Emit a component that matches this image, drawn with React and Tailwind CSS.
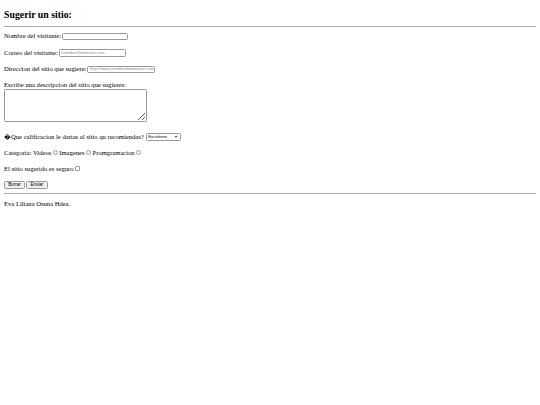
import React from 'react';

const ctrl = "font-['Liberation_Sans',Arial,sans-serif]";

const Campo = ({ label, placeholder, width }) => (
  <div className="h-[16.5px] flex items-center">
    <span>{label}</span>
    <span
      className={`ml-[1px] h-[7.5px] border border-[#999999] rounded-[1.5px] bg-white flex items-center px-[1.5px] overflow-hidden whitespace-nowrap text-[4.3px] text-[#8a8a8a] ${ctrl} ${width}`}
    >
      {placeholder}
    </span>
  </div>
);

const Radio = () => (
  <span className="inline-block mx-[1.5px] w-[5px] h-[5px] rounded-full border border-[#999999] bg-white" />
);

const App = () => {
  return (
    <div className="w-[540px] min-h-[405px] bg-white text-black px-[4px] text-[6.6px] leading-[8px] font-['Liberation_Serif','Times_New_Roman',serif]">
      <h3 className="pt-[10px] text-[9.8px] leading-[10px] font-bold">Sugerir un sitio:</h3>
      <div className="mt-[6px] h-px bg-[#a9a9a9]" />

      <div className="pt-[1px]">
        <Campo label="Nombre del visitante:" placeholder="" width="w-[66px]" />
        <Campo label="Correo del visitante:" placeholder="nombre@dominio.com" width="w-[67px]" />
        <Campo label="Direccion del sitio que sugiere:" placeholder="http://www.nombrededominio.com" width="w-[68px]" />
      </div>

      <div className="mt-[3px] leading-[8px]">Escribe una descripcion del sitio que sugieres:</div>
      <textarea
        readOnly
        className="block w-[143px] h-[33px] border border-[#999999] rounded-[1.5px] bg-white outline-none"
      />

      <div className="mt-[7px] h-[16px] flex items-center">
        <span>{'\uFFFD'}Que calificacion le darias al sitio qu recomiendas?</span>
        <span
          className={`ml-[2px] h-[8px] w-[35px] border border-[#999999] rounded-[1.5px] bg-white flex items-center justify-between px-[1.5px] text-[4.3px] text-black ${ctrl}`}
        >
          <span>Excelente</span>
          <svg width="4" height="3" viewBox="0 0 8 6" className="shrink-0">
            <path d="M1 1.5 L4 4.5 L7 1.5" fill="none" stroke="#000" strokeWidth="1.6" />
          </svg>
        </span>
      </div>

      <div className="h-[16px] flex items-center">
        <span>Categoria: Videos</span>
        <Radio />
        <span>Imagenes</span>
        <Radio />
        <span>Promgramacion</span>
        <Radio />
      </div>

      <div className="h-[16px] flex items-center">
        <span>El sitio sugerido es seguro</span>
        <span className="ml-[1px] inline-block w-[5px] h-[5px] rounded-[1px] border border-[#999999] bg-white" />
      </div>

      <div className="h-[16px] flex items-center gap-[1px]">
        <span className={`h-[8px] w-[21px] flex items-center justify-center border border-[#999999] rounded-[1.5px] bg-[#efefef] text-[4.5px] ${ctrl}`}>
          Borrar
        </span>
        <span className={`h-[8px] w-[22px] flex items-center justify-center border border-[#999999] rounded-[1.5px] bg-[#efefef] text-[4.5px] ${ctrl}`}>
          Enviar
        </span>
      </div>

      <div className="h-px bg-[#a9a9a9]" />
      <div className="h-[21px] flex items-center">Eva Liliana Osuna Hdez.</div>
    </div>
  );
};

export default App;
